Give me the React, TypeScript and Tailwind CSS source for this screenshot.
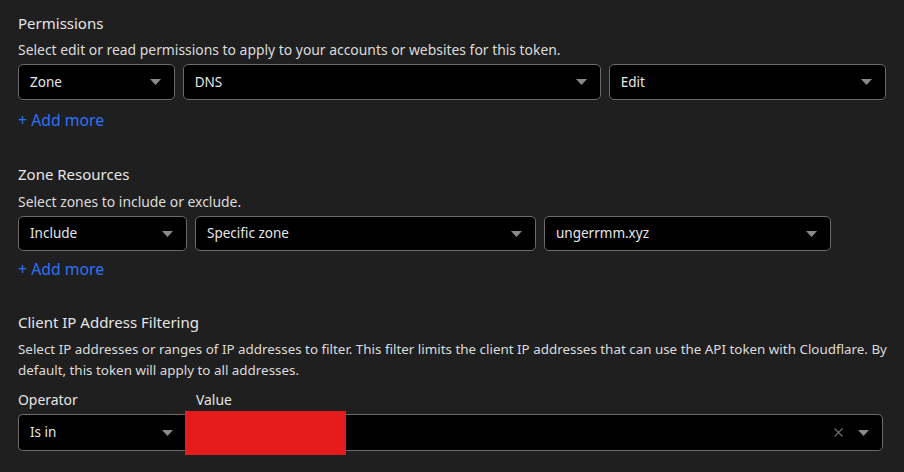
import React from 'react';

const Caret = () => (
  <svg width="11" height="6" viewBox="0 0 11 6" className="shrink-0">
    <path d="M0 0 L11 0 L5.5 6 Z" fill="#8a8a8a" />
  </svg>
);

const Select: React.FC<{ value: string; className?: string }> = ({ value, className = '' }) => (
  <div
    className={`h-[36px] flex items-center justify-between pl-[11px] pr-[13px] bg-black border border-[#6b6b6b] rounded-[5px] text-[13.5px] text-[#e6e6e6] ${className}`}
  >
    <span>{value}</span>
    <Caret />
  </div>
);

const AddMore: React.FC<{ className?: string }> = ({ className = 'mt-[10px]' }) => (
  <button className={`text-[15.8px] text-[#2b73f5] leading-[20px] ${className}`}>+ Add more</button>
);

export default function App() {
  return (
    <div
      className="w-[904px] h-[472px] overflow-hidden bg-[#1f1f1f] text-[#e6e6e6] px-[18px] pt-[12px]"
      style={{ fontFamily: '"Noto Sans", "Open Sans", sans-serif' }}
    >
      <section>
        <h3 className="text-[15px] leading-[22px]">Permissions</h3>
        <p className="text-[13.9px] leading-[20px] mt-[6px] text-[#dcdcdc]">
          Select edit or read permissions to apply to your accounts or websites for this token.
        </p>
        <div className="flex gap-[8px] mt-[4px]">
          <Select value="Zone" className="w-[157px]" />
          <Select value="DNS" className="w-[419px]" />
          <Select value="Edit" className="w-[278px]" />
        </div>
        <AddMore />
      </section>

      <section className="mt-[31px]">
        <h3 className="text-[15px] leading-[22px]">Zone Resources</h3>
        <p className="text-[13.9px] leading-[20px] mt-[7px] text-[#dcdcdc]">Select zones to include or exclude.</p>
        <div className="flex gap-[8px] mt-[4px]">
          <Select value="Include" className="w-[169px] !h-[35px]" />
          <Select value="Specific zone" className="w-[341px] !h-[35px]" />
          <Select value="ungerrmm.xyz" className="w-[287px] !h-[35px]" />
        </div>
        <AddMore className="mt-[8px]" />
      </section>

      <section className="mt-[30px]">
        <h3 className="text-[15px] leading-[22px]">Client IP Address Filtering</h3>
        <p className="text-[13.4px] leading-[21px] mt-[6px] text-[#dcdcdc] w-[872px]">
          Select IP addresses or ranges of IP addresses to filter. This filter limits the client IP addresses that can use
          the API token with Cloudflare. By default, this token will apply to all addresses.
        </p>
        <div className="flex mt-[9px] text-[13.9px] leading-[20px]">
          <span className="w-[178px]">Operator</span>
          <span>Value</span>
        </div>
        <div className="relative flex mt-[4px]">
          <div className="w-[168px] h-[37px] flex items-center justify-between pl-[11px] pr-[13px] bg-black border border-[#6b6b6b] border-r-0 rounded-l-[5px] text-[13.5px]">
            <span>Is in</span>
            <Caret />
          </div>
          <div className="flex-1 mr-[3px] h-[37px] flex items-center justify-end gap-[15px] pr-[13px] bg-black border border-[#6b6b6b] rounded-r-[5px]">
            <svg width="9" height="9" viewBox="0 0 9 9">
              <path d="M0.5 0.5 L8.5 8.5 M8.5 0.5 L0.5 8.5" stroke="#6f6f6f" strokeWidth="1.1" />
            </svg>
            <Caret />
          </div>
          <div className="absolute left-[167px] top-[-3px] w-[161px] h-[44px] bg-[#e61c1c]" />
        </div>
      </section>
    </div>
  );
}
